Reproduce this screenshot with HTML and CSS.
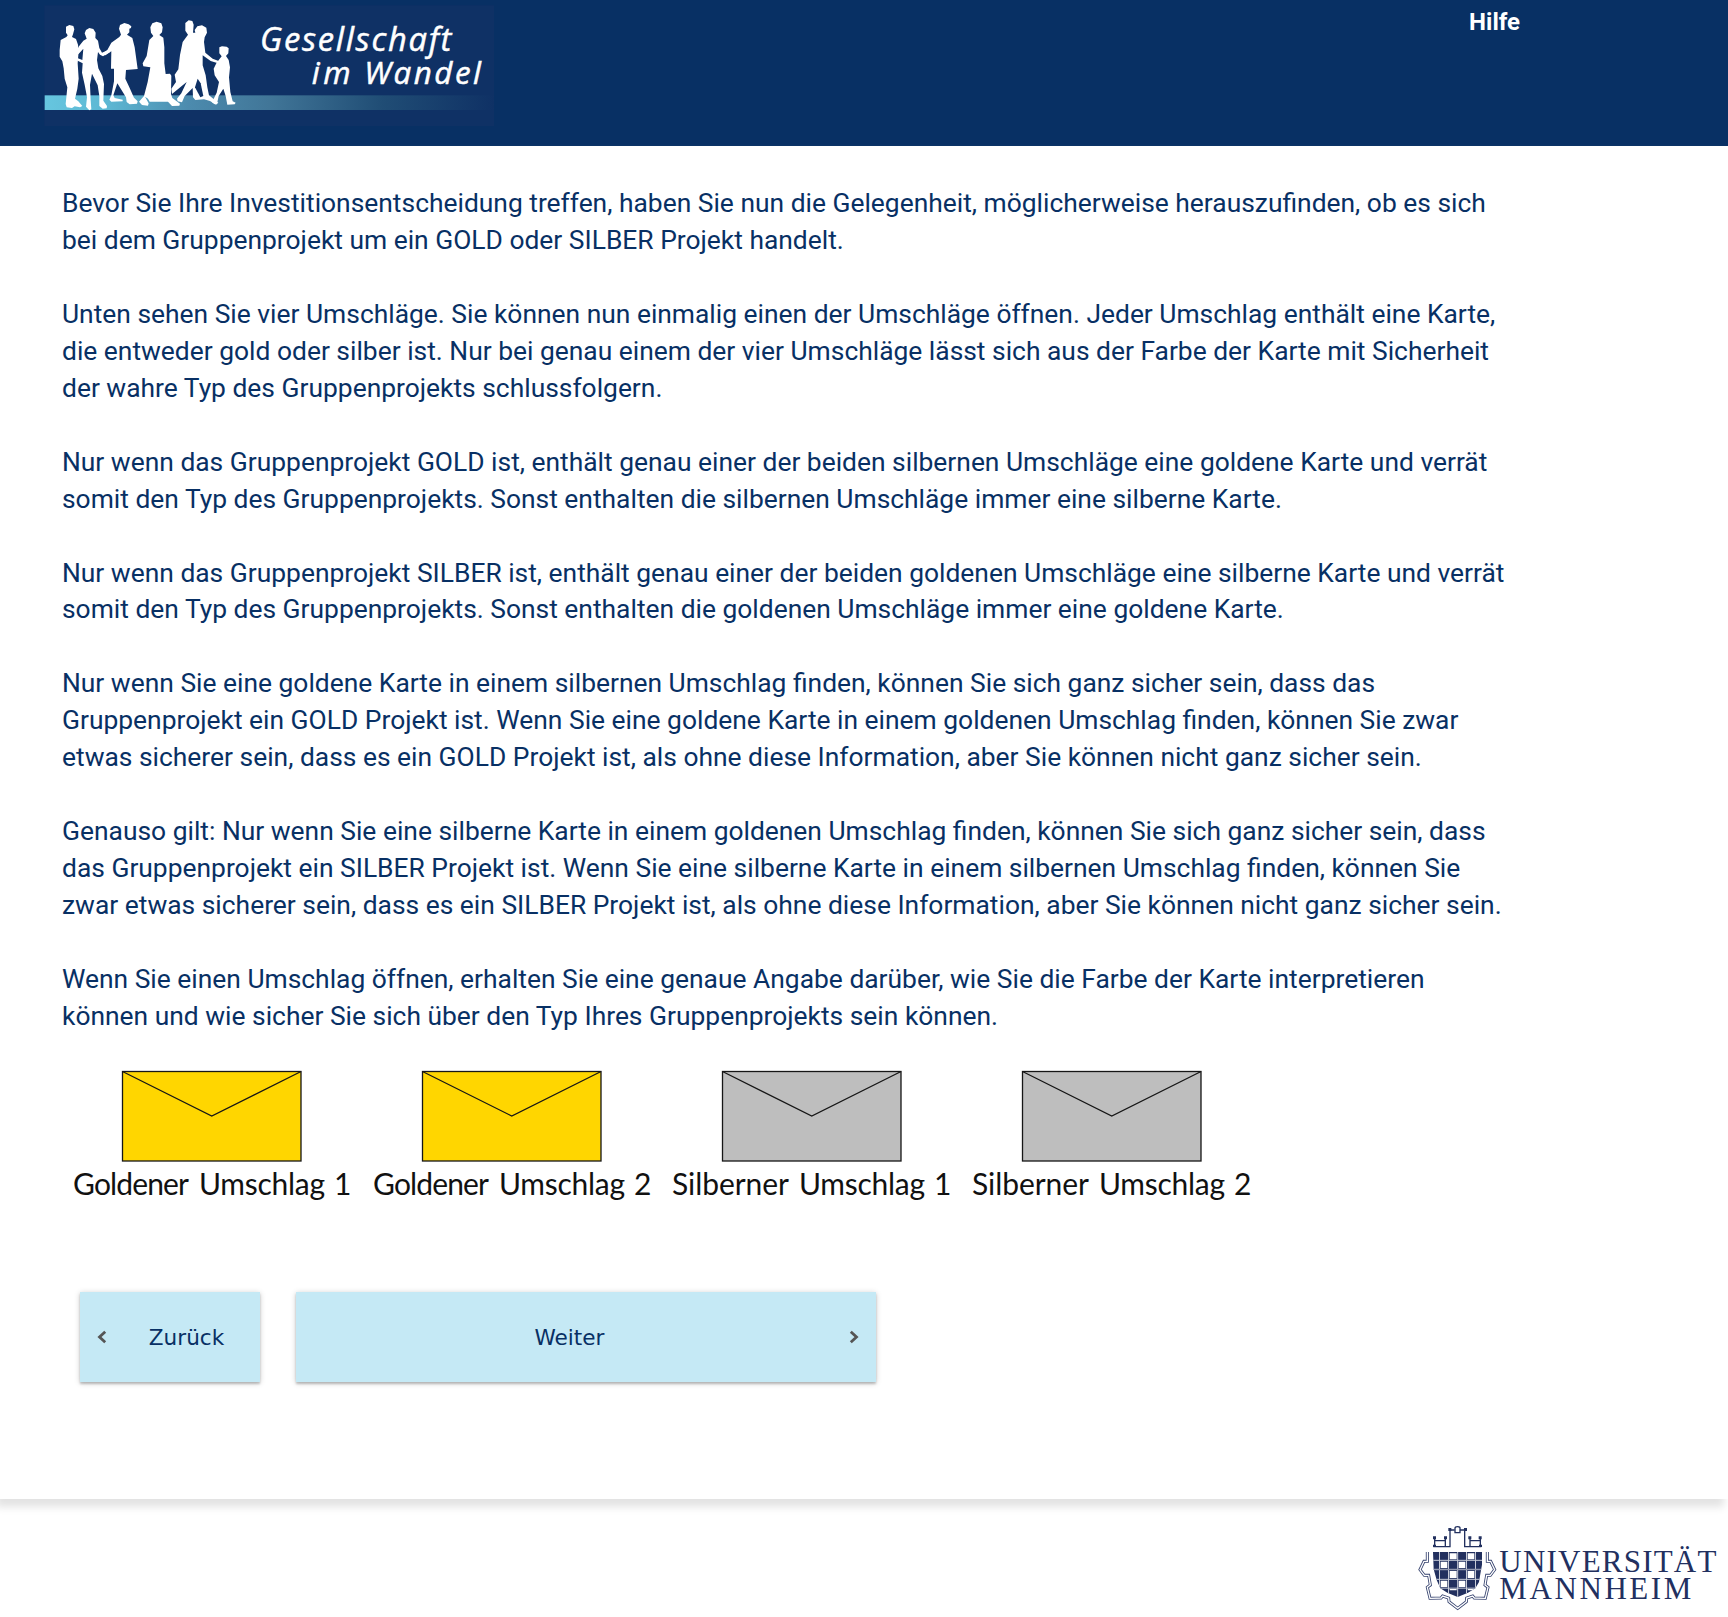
FILE: index.html
```html
<!DOCTYPE html>
<html lang="de">
<head>
<meta charset="utf-8">
<title>Gesellschaft im Wandel</title>
<link rel="stylesheet" href="styles.css">
</head>
<body>
<header class="header">
  <svg class="brand" viewBox="0 0 1470 438" role="img" aria-label="Gesellschaft im Wandel">
    <defs>
      <linearGradient id="band" x1="0" x2="1">
        <stop offset="0" stop-color="#66c6df"/>
        <stop offset=".14" stop-color="#5db7d3"/>
        <stop offset=".32" stop-color="#4c8bae"/>
        <stop offset=".5" stop-color="#417698"/>
        <stop offset=".75" stop-color="#204d75"/>
        <stop offset="1" stop-color="#0f3165"/>
      </linearGradient>
    </defs>
    <rect x="43" y="16" width="1349" height="362" fill="#0f3165"/>
    <rect x="44" y="286" width="1348" height="44" fill="url(#band)"/>
    <g class="people">
      <path d="M108 80L118 75L130 78L133 88L129 103L126 111L138 117L144 134L146 152L143 190L146 236L142 266L135 296L145 304L157 318L150 322L134 319L126 324L110 322L107 312L112 262L104 236L101 205L97 184L89 170L89 150L92 120L109 111L113 106L108 98Z"/>
      <path d="M164 100L168 90L178 84L190 87L197 98L196 114L204 122L208 144L216 158L236 150L240 156L219 169L210 164L204 156L201 180L205 205L217 228L222 252L220 302L231 318L230 325L218 326L208 318L208 288L203 256L186 221L180 254L182 300L184 328L178 331L168 320L171 292L164 254L156 218L158 190L140 181L142 174L157 180L160 146L145 163L138 156L147 139L160 122L170 116Z"/>
      <path d="M267 86L270 75L283 69L296 73L304 79L303 84L298 86L298 97L291 104L307 114L314 142L323 207L288 210L286 236L298 262L312 293L323 304L321 311L299 313L290 306L288 292L262 250L250 286L254 294L278 299L278 304L244 305L238 299L244 286L252 244L252 206L243 206L244 154L226 166L214 162L232 150L244 128L268 111L273 104Z"/>
      <path d="M361 82L367 70L380 65L394 70L398 82L396 97L388 105L400 113L403 142L403 190L407 222L420 221L424 227L423 282L427 294L450 311L448 317L426 318L414 305L359 305L354 296L345 290L356 310L354 317L336 315L327 305L342 288L353 246L361 202L340 199L338 190L350 168L358 120L370 108L363 98Z"/>
      <path d="M466 69L476 61L487 63L491 74L489 98L496 98L494 90L502 79L516 76L529 83L531 98L524 112L522 126L526 158L548 176L568 184L564 190L542 183L518 166L518 196L527 226L532 262L537 286L548 295L565 308L558 314L540 303L522 298L496 300L489 292L488 264L464 288L456 307L443 304L441 296L454 280L470 246L426 282L424 266L438 246L434 224L445 208L450 165L458 126L474 104L466 92Z"/>
      <path d="M503 236L495 262L511 292L520 288L512 250Z" fill="#0f3165"/>
      <path d="M568 142L576 139L590 140L596 145L595 160L588 168L596 180L600 202L597 232L601 276L608 304L617 308L614 313L592 314L587 288L580 266L566 288L562 307L554 313L546 307L560 278L567 246L554 226L551 206L559 190L568 178L575 169L568 160Z"/>
    </g>
    <g class="brand-text">
      <text x="690" y="152" font-size="98" textLength="574">Gesellschaft</text>
      <text x="845" y="253" font-size="94" textLength="117">im</text>
      <text x="1003" y="253" font-size="94" textLength="350">Wandel</text>
    </g>
  </svg>
  <a class="help">Hilfe</a>
</header>

<main class="content">
  <div class="copy">
    <p>Bevor Sie Ihre Investitionsentscheidung treffen, haben Sie nun die Gelegenheit, möglicherweise herauszufinden, ob es sich<br>bei dem Gruppenprojekt um ein GOLD oder SILBER Projekt handelt.</p>
    <p>Unten sehen Sie vier Umschläge. Sie können nun einmalig einen der Umschläge öffnen. Jeder Umschlag enthält eine Karte,<br>die entweder gold oder silber ist. Nur bei genau einem der vier Umschläge lässt sich aus der Farbe der Karte mit Sicherheit<br>der wahre Typ des Gruppenprojekts schlussfolgern.</p>
    <p>Nur wenn das Gruppenprojekt GOLD ist, enthält genau einer der beiden silbernen Umschläge eine goldene Karte und verrät<br>somit den Typ des Gruppenprojekts. Sonst enthalten die silbernen Umschläge immer eine silberne Karte.</p>
    <p>Nur wenn das Gruppenprojekt SILBER ist, enthält genau einer der beiden goldenen Umschläge eine silberne Karte und verrät<br>somit den Typ des Gruppenprojekts. Sonst enthalten die goldenen Umschläge immer eine goldene Karte.</p>
    <p>Nur wenn Sie eine goldene Karte in einem silbernen Umschlag finden, können Sie sich ganz sicher sein, dass das<br>Gruppenprojekt ein GOLD Projekt ist. Wenn Sie eine goldene Karte in einem goldenen Umschlag finden, können Sie zwar<br>etwas sicherer sein, dass es ein GOLD Projekt ist, als ohne diese Information, aber Sie können nicht ganz sicher sein.</p>
    <p>Genauso gilt: Nur wenn Sie eine silberne Karte in einem goldenen Umschlag finden, können Sie sich ganz sicher sein, dass<br>das Gruppenprojekt ein SILBER Projekt ist. Wenn Sie eine silberne Karte in einem silbernen Umschlag finden, können Sie<br>zwar etwas sicherer sein, dass es ein SILBER Projekt ist, als ohne diese Information, aber Sie können nicht ganz sicher sein.</p>
    <p>Wenn Sie einen Umschlag öffnen, erhalten Sie eine genaue Angabe darüber, wie Sie die Farbe der Karte interpretieren<br>können und wie sicher Sie sich über den Typ Ihres Gruppenprojekts sein können.</p>
  </div>

  <div class="envelopes">
    <svg class="envelope gold" viewBox="0 0 300 140">
      <rect x="60.500" y="11.500" width="178.500" height="89.500"/>
      <path d="M60.500 11.500l89.250 44.500 89.250-44.500"/>
      <text y="135"><tspan x="11" textLength="116">Goldener</tspan><tspan x="137" textLength="126">Umschlag</tspan><tspan x="272">1</tspan></text>
    </svg>
    <svg class="envelope gold" viewBox="0 0 300 140">
      <rect x="60.500" y="11.500" width="178.500" height="89.500"/>
      <path d="M60.500 11.500l89.250 44.500 89.250-44.500"/>
      <text y="135"><tspan x="11" textLength="116">Goldener</tspan><tspan x="137" textLength="126">Umschlag</tspan><tspan x="272">2</tspan></text>
    </svg>
    <svg class="envelope silver" viewBox="0 0 300 140">
      <rect x="60.500" y="11.500" width="178.500" height="89.500"/>
      <path d="M60.500 11.500l89.250 44.500 89.250-44.500"/>
      <text y="135"><tspan x="10" textLength="117">Silberner</tspan><tspan x="137" textLength="126">Umschlag</tspan><tspan x="272">1</tspan></text>
    </svg>
    <svg class="envelope silver" viewBox="0 0 300 140">
      <rect x="60.500" y="11.500" width="178.500" height="89.500"/>
      <path d="M60.500 11.500l89.250 44.500 89.250-44.500"/>
      <text y="135"><tspan x="10" textLength="117">Silberner</tspan><tspan x="137" textLength="126">Umschlag</tspan><tspan x="272">2</tspan></text>
    </svg>
  </div>

  <div class="actions">
    <button class="button back"><svg class="chevron" viewBox="0 0 10 14"><path d="M8.200 1.700L2.500 7l5.700 5.300"/></svg><span>Zurück</span></button>
    <button class="button next"><span>Weiter</span><svg class="chevron" viewBox="0 0 10 14"><path d="M1.800 1.700L7.500 7l-5.700 5.300"/></svg></button>
  </div>
</main>

<footer class="footer">
  <svg class="university" viewBox="0 99 984 282" role="img" aria-label="Universität Mannheim">
    <defs>
      <clipPath id="shield"><path d="M99 186H246V224L241 252L237 276L226 295L204 308L173 321L142 308L121 295L110 270L101 238z"/></clipPath>
    </defs>
    <g class="crown">
      <path d="M104 144v21M104 152h32M136 144v26M100 170h50V120h14M180 120h14V170h50M210 144v26M210 152h31M241 144v21"/>
      <path d="M165 128v-13q0-5 8-5t7 5v13z" stroke-width="2.500"/>
      <path class="solid" d="M99 139h9v9h-9zM132 139h9v9h-9zM145 114h9v9h-9zM192 114h9v9h-9zM205 139h9v9h-9zM236 139h9v9h-9zM99 164h9v7h-9zM237 164h9v7h-9z"/>
    </g>
    <g clip-path="url(#shield)">
      <rect class="solid" x="95" y="184" width="155" height="140"/>
      <path fill="#fff" d="M149 190h21v18h-21zM203 190h20v18h-20zM122 215h20v19h-20zM176 215h20v19h-20zM149 243h21v21h-21zM203 243h20v21h-20zM122 272h20v19h-20zM176 272h20v19h-20zM149 297h21v4h-21zM203 297h20v4h-20z"/>
      <path class="grid" d="M118.500 184v140M145.500 184v140M173 184v140M199.500 184v140M226.500 184v140M95 211h155M95 268h155M95 294.500h155"/>
      <path d="M95 238.500h155" stroke="#9399b0" stroke-width="5"/>
    </g>
    <path class="ribbon" d="M82 186v28l-10 0-12 25 13 17 13 0 5 29-9 7 8 33 33-1 5-6 18 6 1 11 26 20 26-20 1-11 18-6 5 6 33 1 8-33-9-7 5-29 11 0 13-17-12-25-10 0V186"/>
    <path class="ribbon-gap" d="M82 184v30l-10 0-12 25 13 17 13 0 5 29-9 7 8 33 33-1 5-6 18 6 1 11 26 20 26-20 1-11 18-6 5 6 33 1 8-33-9-7 5-29 11 0 13-17-12-25-10 0V184"/>
    <g class="university-text">
      <text x="298" y="247" textLength="651">UNIVERSITÄT</text>
      <text x="298" y="327" textLength="576">MANNHEIM</text>
    </g>
  </svg>
</footer>
</body>
</html>
```
FILE: styles.css
```css
* {
  box-sizing: border-box;
}

body {
  margin: 0;
  min-height: 1617px;
  display: flex;
  flex-direction: column;
  background: #fff;
  color: #083064;
  font-family: Roboto, sans-serif;
}

svg {
  display: block;
  flex: none;
}

.header {
  height: 146px;
  padding: 0 208px 0 30px;
  display: flex;
  justify-content: space-between;
  align-items: flex-start;
  background: #083064;
}

.brand {
  width: 490px;
  height: 146px;
}

.people,
.brand-text {
  fill: #fff;
}

.brand-text {
  stroke: #fff;
  stroke-width: 1.5px;
  font-family: "Open Sans", sans-serif;
  font-style: italic;
}

.help {
  padding-top: 8px;
  color: #fff;
  font-size: 24px;
  line-height: 28px;
  font-weight: 700;
}

.content {
  height: 1353px;
  padding: 39px 62px 0;
  box-shadow: -4px 8px 8px #e3e3e3;
}

.copy {
  height: 849px;
}

.copy p {
  margin: 0 0 36.960px;
  font-size: 26.400px;
  line-height: 36.960px;
  white-space: nowrap;
}

.envelopes {
  display: flex;
  padding-top: 26px;
}

.envelope {
  width: 300px;
  height: 140px;
  stroke: #161616;
  stroke-width: 1.3px;
}

.envelope path {
  fill: none;
}

.envelope text {
  fill: #111;
  stroke: none;
  font-family: Lato, sans-serif;
  font-size: 30px;
}

.gold {
  fill: #ffd600;
}

.silver {
  fill: #bebebe;
}

.actions {
  display: flex;
  gap: 36px;
  padding: 92px 18px 0;
}

.button {
  height: 90px;
  padding: 0 17px;
  border: 0;
  display: flex;
  align-items: center;
  background: #c5e9f5;
  box-shadow: 0 2px 2px rgba(0, 0, 0, .2), 0 1px 6px rgba(0, 0, 0, .2);
  color: #083064;
  font-family: "DejaVu Sans", sans-serif;
  font-size: 21.600px;
}

.button span {
  flex: 1;
  padding-top: 1px;
  text-align: center;
}

.back {
  width: 180px;
}

.button.back span {
  padding-left: 23px;
}

.next {
  width: 580px;
}

.button.next span {
  padding-right: 23px;
}

.chevron {
  width: 10px;
  height: 14px;
  fill: none;
  stroke: #555;
  stroke-width: 2.8px;
}

.footer {
  height: 118px;
  padding-top: 24px;
  display: flex;
  justify-content: flex-end;
}

.university {
  width: 328px;
  height: 94px;
}

.crown path {
  fill: none;
  stroke: #22305f;
  stroke-width: 4px;
}

.crown .solid,
.solid {
  fill: #22305f;
  stroke: none;
}

.grid {
  fill: none;
  stroke: #c8ccd8;
  stroke-width: 3px;
}

.ribbon,
.ribbon-gap {
  fill: none;
  stroke: #35426e;
  stroke-width: 9px;
}

.ribbon-gap {
  stroke: #fff;
  stroke-width: 4px;
}

.university-text {
  fill: #22305f;
  font-family: "Liberation Serif", serif;
  font-size: 93px;
}
```
